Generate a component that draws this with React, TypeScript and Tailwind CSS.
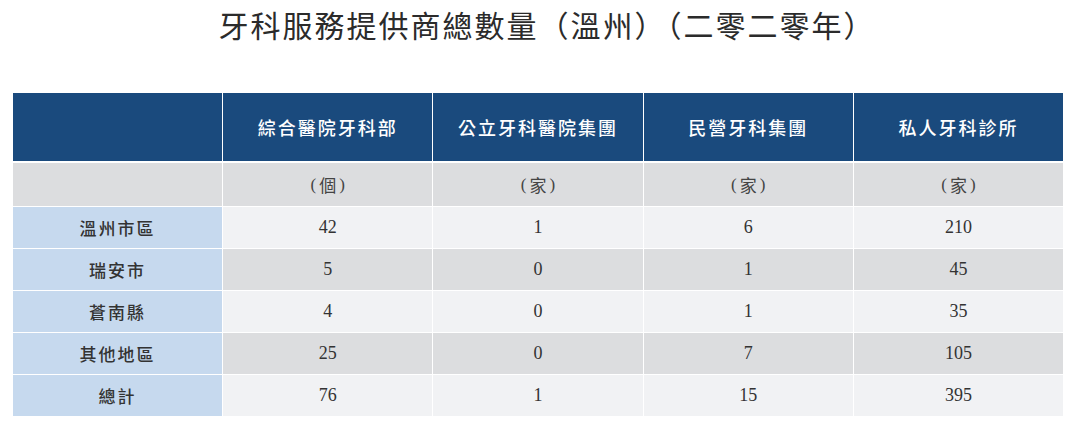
const columns = ['綜合醫院牙科部', '公立牙科醫院集團', '民營牙科集團', '私人牙科診所'];
const units = ['個', '家', '家', '家'];

const rows: { region: string; values: string[] }[] = [
  { region: '溫州市區', values: ['42', '1', '6', '210'] },
  { region: '瑞安市', values: ['5', '0', '1', '45'] },
  { region: '蒼南縣', values: ['4', '0', '1', '35'] },
  { region: '其他地區', values: ['25', '0', '7', '105'] },
  { region: '總計', values: ['76', '1', '15', '395'] },
];

const cjk = "font-['Noto_Sans_CJK_TC','Noto_Sans_CJK_SC',sans-serif]";
const serif = "font-['Liberation_Serif','Noto_Sans_CJK_TC',serif]";

export default function App() {
  return (
    <div className="h-[433px] w-[1080px] overflow-hidden bg-white">
      {/* Title */}
      <h1
        className={`${cjk} pl-[14px] pt-[9px] text-center text-[30px] leading-[30px] font-normal tracking-[2px] text-[#2b2b2b]`}
      >
        牙科服務提供商總數量（溫州）（二零二零年）
      </h1>

      {/* Table */}
      <div className="ml-[13px] mt-[54px] grid w-[1050px] grid-cols-5 gap-x-px gap-y-px bg-white">
        {/* Header */}
        <div className="h-[68px] bg-[#1a4a7d]" />
        {columns.map((c) => (
          <div
            key={c}
            className={`${cjk} flex h-[68px] items-center justify-center bg-[#1a4a7d] text-[18px] font-medium tracking-[2px] text-white`}
          >
            {c}
          </div>
        ))}

        {/* Units */}
        <div className="mt-px h-[43px] bg-[#dcdddf]" />
        {units.map((u, i) => (
          <div
            key={i}
            className={`${serif} mt-px flex h-[43px] items-center justify-center gap-[3px] bg-[#dcdddf] text-[17px] text-[#444]`}
          >
            <span>(</span>
            <span className={cjk}>{u}</span>
            <span>)</span>
          </div>
        ))}

        {/* Data rows */}
        {rows.map((r, ri) => {
          const bg = ri % 2 === 0 ? 'bg-[#f1f2f4]' : 'bg-[#dcdddf]';
          return [
            <div
              key={r.region}
              className={`${cjk} flex h-[41px] items-center justify-center bg-[#c6d9ee] text-[17px] font-medium tracking-[2px] text-[#333]`}
            >
              {r.region}
            </div>,
            ...r.values.map((v, vi) => (
              <div
                key={r.region + vi}
                className={`${serif} flex h-[41px] items-center justify-center text-[18px] text-[#333] ${bg}`}
              >
                {v}
              </div>
            )),
          ];
        })}
      </div>
    </div>
  );
}
